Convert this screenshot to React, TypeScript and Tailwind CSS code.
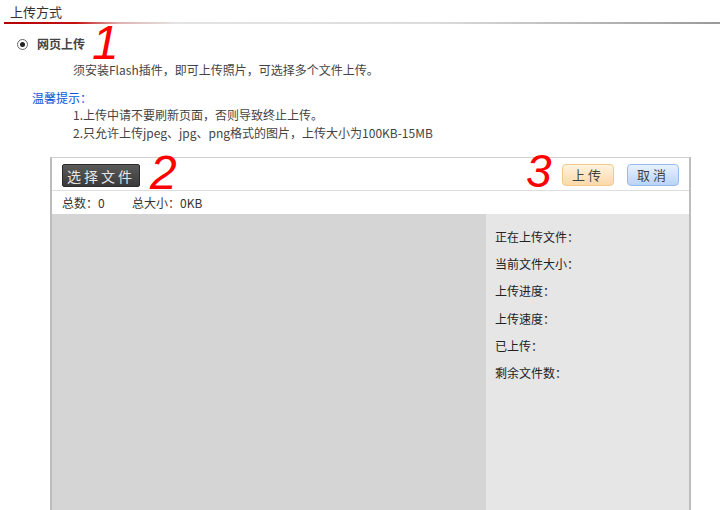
import React from "react";

const font = "font-['Noto_Sans_CJK_SC','Noto_Sans',sans-serif]";

export default function App() {
  const stats = ["正在上传文件：", "当前文件大小：", "上传进度：", "上传速度：", "已上传：", "剩余文件数："];
  return (
    <div className={`relative w-[720px] h-[510px] overflow-hidden bg-white text-[12px] text-[#333] ${font}`}>
      {/* title */}
      <div className="h-[22px] pl-[10px] pt-[2px] text-[13px] leading-[20px] text-[#333]">上传方式</div>
      <div className="ml-[4px] h-[2px] bg-[linear-gradient(to_right,#b40000_0%,#c41010_10%,#e0b0b0_16%,#e4e4e4_24%,#dcdcdc_60%,#999_100%)]" />

      {/* radio */}
      <div className="mt-[12px] flex items-center h-[16px] pl-[17px]">
        <span className="flex h-[11px] w-[11px] items-center justify-center rounded-full border border-[#666] bg-white">
          <span className="h-[5px] w-[5px] rounded-full bg-[#222]" />
        </span>
        <span className="ml-[9px] font-bold leading-[16px] text-[#444]">网页上传</span>
      </div>

      <div className="mt-[10px] h-[16px] pl-[73px] leading-[16px] text-[#444]">须安装Flash插件，即可上传照片，可选择多个文件上传。</div>
      <div className="mt-[12px] h-[16px] pl-[32px] leading-[16px] text-[#0b55d8]">温馨提示：</div>
      <div className="h-[18px] pl-[73px] leading-[18px] text-[#444]">1.上传中请不要刷新页面，否则导致终止上传。</div>
      <div className="h-[18px] pl-[73px] leading-[18px] text-[#444]">2.只允许上传jpeg、jpg、png格式的图片，上传大小为100KB-15MB</div>

      {/* upload box */}
      <div className="ml-[50px] mt-[15px] w-[641px] h-[400px] border-x-2 border-t border-[#bdbdbd] border-t-[#cfcfcf] flex flex-col">
        <div className="h-[33px] shrink-0 flex items-start justify-between border-b border-[#dedede] px-[10px] pt-[6px]">
          <div className="h-[23px] w-[78px] flex items-center justify-center rounded-[2px] border border-[#2a2a2a] bg-[linear-gradient(#5a5a5a,#3a3a3a)] text-[14px] leading-[20px] tracking-[3px] text-[#e6e6e6]">选择文件</div>
          <div className="flex gap-[13px]">
            <div className="h-[22px] w-[52px] flex items-center justify-center rounded-[4px] border border-[#f2c98c] bg-[linear-gradient(#fff3df,#fcd9a8)] text-[13px] leading-[18px] tracking-[3px] text-[#444]">上传</div>
            <div className="h-[22px] w-[52px] flex items-center justify-center rounded-[4px] border border-[#98bbef] bg-[linear-gradient(#e9f2fe,#b9d4f8)] text-[13px] leading-[18px] tracking-[3px] text-[#444]">取消</div>
          </div>
        </div>
        <div className="h-[23px] shrink-0 flex items-center pl-[10px] text-[12px] leading-[16px] text-[#333]">
          <span className="w-[70px]">总数：0</span>
          <span>总大小：0KB</span>
        </div>
        <div className="flex flex-1">
          <div className="w-[434px] bg-[#d5d5d5]" />
          <div className="flex-1 bg-[#e6e6e6] pl-[9px] pt-[9px]">
            {stats.map((s) => (
              <div key={s} className="h-[27.2px] leading-[27px] text-[12px] text-[#222]">{s}</div>
            ))}
          </div>
        </div>
      </div>

      {/* annotations */}
      <div className="absolute left-[92px] top-[25px] text-[48px] leading-[35px] italic text-[#ff0000] font-['Liberation_Sans',Arial,sans-serif]">1</div>
      <div className="absolute left-[150px] top-[155px] text-[48px] leading-[35px] italic text-[#ff0000] font-['Liberation_Sans',Arial,sans-serif]">2</div>
      <div className="absolute left-[526px] top-[155px] text-[46px] leading-[33px] italic text-[#ff0000] font-['Liberation_Sans',Arial,sans-serif]">3</div>
    </div>
  );
}
